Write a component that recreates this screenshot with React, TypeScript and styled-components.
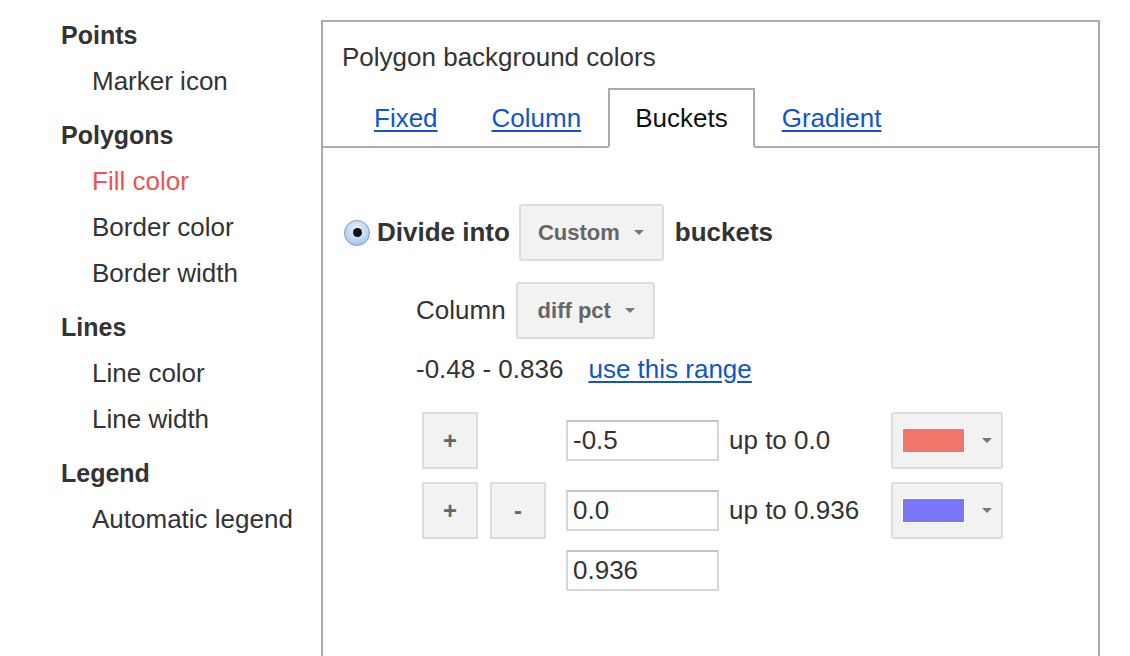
import React from 'react';
import styled, {createGlobalStyle} from 'styled-components';

const Global = createGlobalStyle`
    html, body {
        margin: 0;
        padding: 0;
        overflow: hidden;
        background: #fff;
    }
    body {
        font-family: "Liberation Sans", Arial, sans-serif;
        color: #333;
    }
`;

const Layout = styled.div`
    display: flex;
    align-items: flex-start;
    height: 656px;
`;

const Sidebar = styled.nav`
    width: 321px;
    flex-shrink: 0;
    box-sizing: border-box;
    padding: 12px 0 0 61px;
`;

const Group = styled.div`
    margin-bottom: 8px;
`;

const GroupTitle = styled.div`
    font-size: 25px;
    font-weight: bold;
    line-height: 46px;
    color: #333;
`;

const NavItem = styled.div<{$active?: boolean}>`
    font-size: 26px;
    line-height: 46px;
    padding-left: 31px;
    color: ${(p) => (p.$active ? '#ef5350' : '#333')};
`;

const Panel = styled.section`
    margin-top: 20px;
    width: 779px;
    height: 700px;
    flex-shrink: 0;
    box-sizing: border-box;
    border: 2px solid #aaa;
    border-bottom: none;
`;

const PanelTitle = styled.div`
    padding: 20px 0 0 19px;
    font-size: 26px;
    line-height: 30px;
    color: #333;
`;

const TabBar = styled.div`
    display: flex;
    margin-top: 16px;
    padding-left: 24px;
    border-bottom: 2px solid #aaa;
`;

const Tab = styled.div<{$active?: boolean}>`
    height: 56px;
    display: flex;
    align-items: center;
    padding: 0 25px;
    font-size: 26px;
    border: 2px solid ${(p) => (p.$active ? '#aaa' : 'transparent')};
    border-bottom-color: ${(p) => (p.$active ? '#fff' : 'transparent')};
    margin-bottom: -2px;
    background: ${(p) => (p.$active ? '#fff' : 'transparent')};
    background-clip: padding-box;
    color: ${(p) => (p.$active ? '#111' : '#1155cc')};
    text-decoration: ${(p) => (p.$active ? 'none' : 'underline')};
    text-underline-offset: 3px;
`;

const Body = styled.div`
    padding: 56px 0 0 21px;
`;

const Row = styled.div`
    display: flex;
    align-items: center;
`;

const Radio = styled.span`
    width: 26px;
    height: 26px;
    box-sizing: border-box;
    border-radius: 50%;
    border: 1px solid #7f9db9;
    background: radial-gradient(circle at 50% 35%, #eef5ff 0%, #bcd5f5 55%, #8fb5e6 100%);
    display: flex;
    align-items: center;
    justify-content: center;
    margin-right: 7px;

    &::after {
        content: '';
        width: 9px;
        height: 9px;
        border-radius: 50%;
        background: #111;
    }
`;

const Strong = styled.span`
    font-size: 26px;
    font-weight: bold;
    color: #333;
`;

const Text = styled.span`
    font-size: 26px;
    color: #333;
`;

const Arrow = styled.span`
    width: 0;
    height: 0;
    border-left: 5px solid transparent;
    border-right: 5px solid transparent;
    border-top: 5px solid #777;
`;

const Select = styled.div<{$margin: string; $pad?: number}>`
    height: 57px;
    box-sizing: border-box;
    display: inline-flex;
    align-items: center;
    gap: 14px;
    padding: 0 18px 0 ${(p) => p.$pad ?? 17}px;
    margin: ${(p) => p.$margin};
    background: #f2f2f2;
    border: 2px solid #dcdcdc;
    border-radius: 3px;
    font-size: 22px;
    font-weight: bold;
    color: #666;
`;

const Sub = styled.div`
    margin-left: 72px;
`;

const SubRow = styled(Row)`
    margin-top: 21px;
`;

const RangeRow = styled.div`
    margin-top: 15px;
    font-size: 26px;
    line-height: 30px;
    color: #333;
`;

const Link = styled.a`
    color: #1155cc;
    text-decoration: underline;
    text-underline-offset: 3px;
    margin-left: 25px;
    cursor: pointer;
`;

const Buckets = styled.div`
    margin: 28px 0 0 6px;
    display: flex;
    flex-direction: column;
    gap: 13px;
`;

const BucketRow = styled.div`
    display: flex;
    align-items: center;
    height: 57px;
`;

const Slot = styled.div<{$w: number}>`
    width: ${(p) => p.$w}px;
    flex-shrink: 0;
    display: flex;
`;

const SquareButton = styled.div`
    width: 56px;
    height: 57px;
    box-sizing: border-box;
    background: #f2f2f2;
    border: 2px solid #dcdcdc;
    display: flex;
    align-items: center;
    justify-content: center;
    font-size: 24px;
    font-weight: bold;
    color: #666;
`;

const Input = styled.input`
    width: 153px;
    height: 41px;
    box-sizing: border-box;
    border: 2px solid #d6d6d6;
    border-top-color: #c4c4c4;
    padding: 0 5px;
    font-family: "Liberation Sans", Arial, sans-serif;
    font-size: 26px;
    color: #333;
    outline: none;
`;

const UpTo = styled.span`
    width: 162px;
    margin-left: 10px;
    font-size: 26px;
    color: #333;
`;

const ColorButton = styled.div`
    width: 112px;
    height: 57px;
    box-sizing: border-box;
    background: #f2f2f2;
    border: 2px solid #dcdcdc;
    border-radius: 3px;
    display: flex;
    align-items: center;
    padding-left: 10px;
    gap: 18px;
`;

const Swatch = styled.span<{$color: string}>`
    width: 61px;
    height: 23px;
    background: ${(p) => p.$color};
    outline: 1px solid #fff;
`;

const LastRow = styled.div`
    margin-left: 144px;
    margin-top: -2px;
`;

const nav = [
    {title: 'Points', items: ['Marker icon']},
    {title: 'Polygons', items: ['Fill color', 'Border color', 'Border width']},
    {title: 'Lines', items: ['Line color', 'Line width']},
    {title: 'Legend', items: ['Automatic legend']},
];

const buckets = [
    {from: '-0.5', to: 'up to 0.0', color: '#f0756a', minus: false},
    {from: '0.0', to: 'up to 0.936', color: '#7777f7', minus: true},
];

export default function App() {
    return (
        <>
            <Global />
            <Layout>
                <Sidebar>
                    {nav.map((g) => (
                        <Group key={g.title}>
                            <GroupTitle>{g.title}</GroupTitle>
                            {g.items.map((i) => (
                                <NavItem key={i} $active={i === 'Fill color'}>
                                    {i}
                                </NavItem>
                            ))}
                        </Group>
                    ))}
                </Sidebar>
                <Panel>
                    <PanelTitle>Polygon background colors</PanelTitle>
                    <TabBar>
                        <Tab>Fixed</Tab>
                        <Tab>Column</Tab>
                        <Tab $active>Buckets</Tab>
                        <Tab>Gradient</Tab>
                    </TabBar>
                    <Body>
                        <Row>
                            <Radio />
                            <Strong>Divide into</Strong>
                            <Select $margin="0 11px 0 9px">
                                Custom <Arrow />
                            </Select>
                            <Strong>buckets</Strong>
                        </Row>
                        <Sub>
                            <SubRow>
                                <Text>Column</Text>
                                <Select $margin="0 0 0 10px" $pad={20}>
                                    diff pct <Arrow />
                                </Select>
                            </SubRow>
                            <RangeRow>
                                -0.48 - 0.836
                                <Link>use this range</Link>
                            </RangeRow>
                            <Buckets>
                                {buckets.map((b) => (
                                    <BucketRow key={b.from}>
                                        <Slot $w={68}>
                                            <SquareButton>+</SquareButton>
                                        </Slot>
                                        <Slot $w={76}>{b.minus && <SquareButton>-</SquareButton>}</Slot>
                                        <Input defaultValue={b.from} />
                                        <UpTo>{b.to}</UpTo>
                                        <ColorButton>
                                            <Swatch $color={b.color} />
                                            <Arrow />
                                        </ColorButton>
                                    </BucketRow>
                                ))}
                                <LastRow>
                                    <Input defaultValue="0.936" />
                                </LastRow>
                            </Buckets>
                        </Sub>
                    </Body>
                </Panel>
            </Layout>
        </>
    );
}
